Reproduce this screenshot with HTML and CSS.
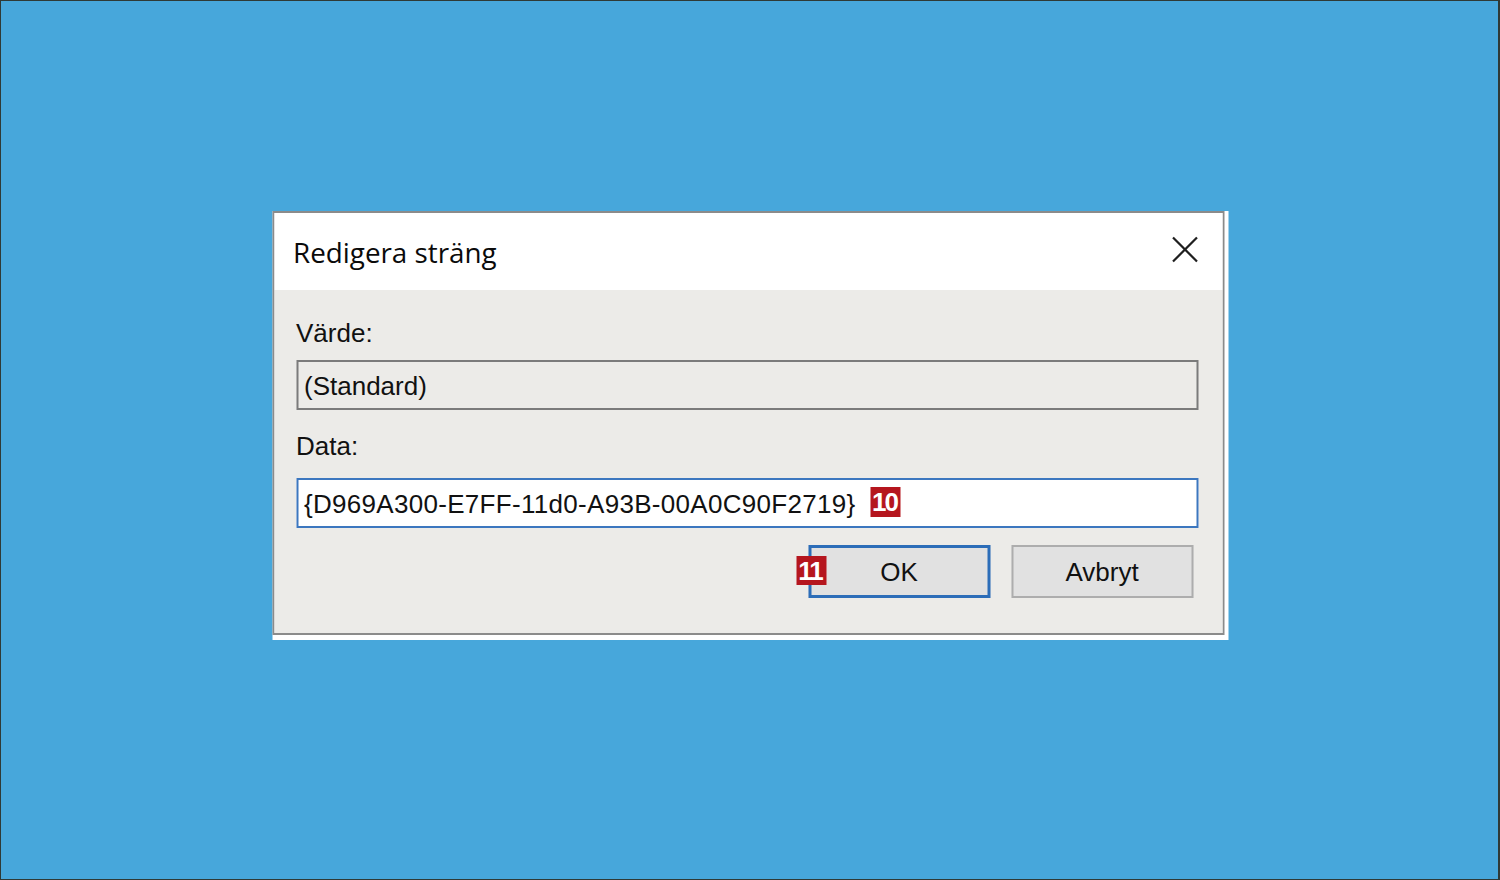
FILE: index.html
```html
<!DOCTYPE html>
<html lang="sv">
<head>
<meta charset="utf-8">
<title>Redigera sträng</title>
<link rel="stylesheet" href="styles.css">
</head>
<body class="desktop">
  <div class="dialog-wrap">
    <div class="dialog">
      <div class="titlebar">
        <span class="title">Redigera sträng</span>
        <span class="close" aria-label="Stäng">
          <svg width="27" height="27" viewBox="0 0 27 27"><path d="M1.5 1.5 L25.5 25.5 M25.5 1.5 L1.5 25.5" stroke="#1f1f1f" stroke-width="2.2" fill="none"/></svg>
        </span>
      </div>
      <div class="content">
        <div class="lbl lbl-value">Värde:</div>
        <div class="field field-disabled">(Standard)</div>
        <div class="lbl lbl-data">Data:</div>
        <div class="field field-active"><span class="data-text">{D969A300-E7FF-11d0-A93B-00A0C90F2719}</span><span class="badge badge-inline">10</span></div>
        <div class="buttons">
          <div class="btn-wrap">
            <span class="badge badge-ok">11</span>
            <div class="btn btn-default">OK</div>
          </div>
          <div class="btn">Avbryt</div>
        </div>
      </div>
    </div>
  </div>
</body>
</html>
```

FILE: styles.css
```css
html, body {
  margin: 0;
  padding: 0;
}
.desktop {
  box-sizing: border-box;
  width: 1500px;
  height: 880px;
  background: #47a7db;
  border: 1px solid #2f3a36;
  border-right-width: 2px;
  padding-top: 210px;
  font-family: "Liberation Sans", Arial, sans-serif;
  color: #111;
  overflow: hidden;
}
.dialog-wrap {
  width: 952px;
  margin: 0 auto;
  padding: 0 4px 5px 0;
  background: #ffffff;
  transform: translateX(0.5px);
}
.dialog {
  box-sizing: border-box;
  width: 952px;
  height: 424px;
  border: 2px solid #8b8b8b;
  display: flex;
  flex-direction: column;
}
.titlebar {
  height: 77px;
  flex: none;
  background: #ffffff;
  display: flex;
  align-items: center;
  justify-content: space-between;
  padding: 0 24px 0 19px;
}
.title {
  font-family: "Open Sans", "Noto Sans", sans-serif;
  font-size: 27.8px;
  color: #0a0a0a;
  padding-top: 0;
}
.close {
  display: flex;
  width: 27px;
  height: 27px;
  margin-top: -4px;
}
.content {
  flex: 1;
  background: #ecebe8;
  padding: 28px 24px 0 22px;
  font-size: 26px;
}
.lbl {
  line-height: 30px;
  height: 30px;
}
.lbl-data {
  margin-top: 21px;
}
.field {
  box-sizing: border-box;
  height: 50px;
  margin-top: 12px;
  padding: 1px 6px 0 6px;
  line-height: 44px;
  display: flex;
  align-items: center;
}
.field-disabled {
  border: 2px solid #7b7b7b;
  background: #ecebe8;
}
.field-active {
  margin-top: 17px;
  border: 2px solid #3c77bf;
  background: #ffffff;
}
.data-text {
  letter-spacing: 0.3px;
}
.badge {
  display: inline-flex;
  align-items: center;
  justify-content: center;
  background: #b5161e;
  color: #ffffff;
  font-weight: bold;
  font-size: 26px;
  letter-spacing: -2px;
  line-height: 1;
}
.badge-inline {
  width: 30px;
  height: 30px;
  margin-left: 15px;
  margin-top: -3px;
  padding-right: 2px;
  box-sizing: border-box;
}
.buttons {
  margin-top: 17px;
  display: flex;
  justify-content: flex-end;
  gap: 21px;
  padding-right: 5px;
}
.btn-wrap {
  position: relative;
  display: flex;
}
.btn {
  box-sizing: border-box;
  width: 182px;
  height: 53px;
  background: #e1e1e1;
  border: 2px solid #adadad;
  display: flex;
  align-items: center;
  justify-content: center;
  font-size: 26px;
  color: #111;
  padding-top: 2px;
}
.btn-default {
  border: 3px solid #2c6db8;
}
.badge-ok {
  position: absolute;
  left: -12px;
  top: 11px;
  width: 30px;
  height: 29px;
  padding-right: 2px;
  box-sizing: border-box;
  z-index: 2;
}
```
